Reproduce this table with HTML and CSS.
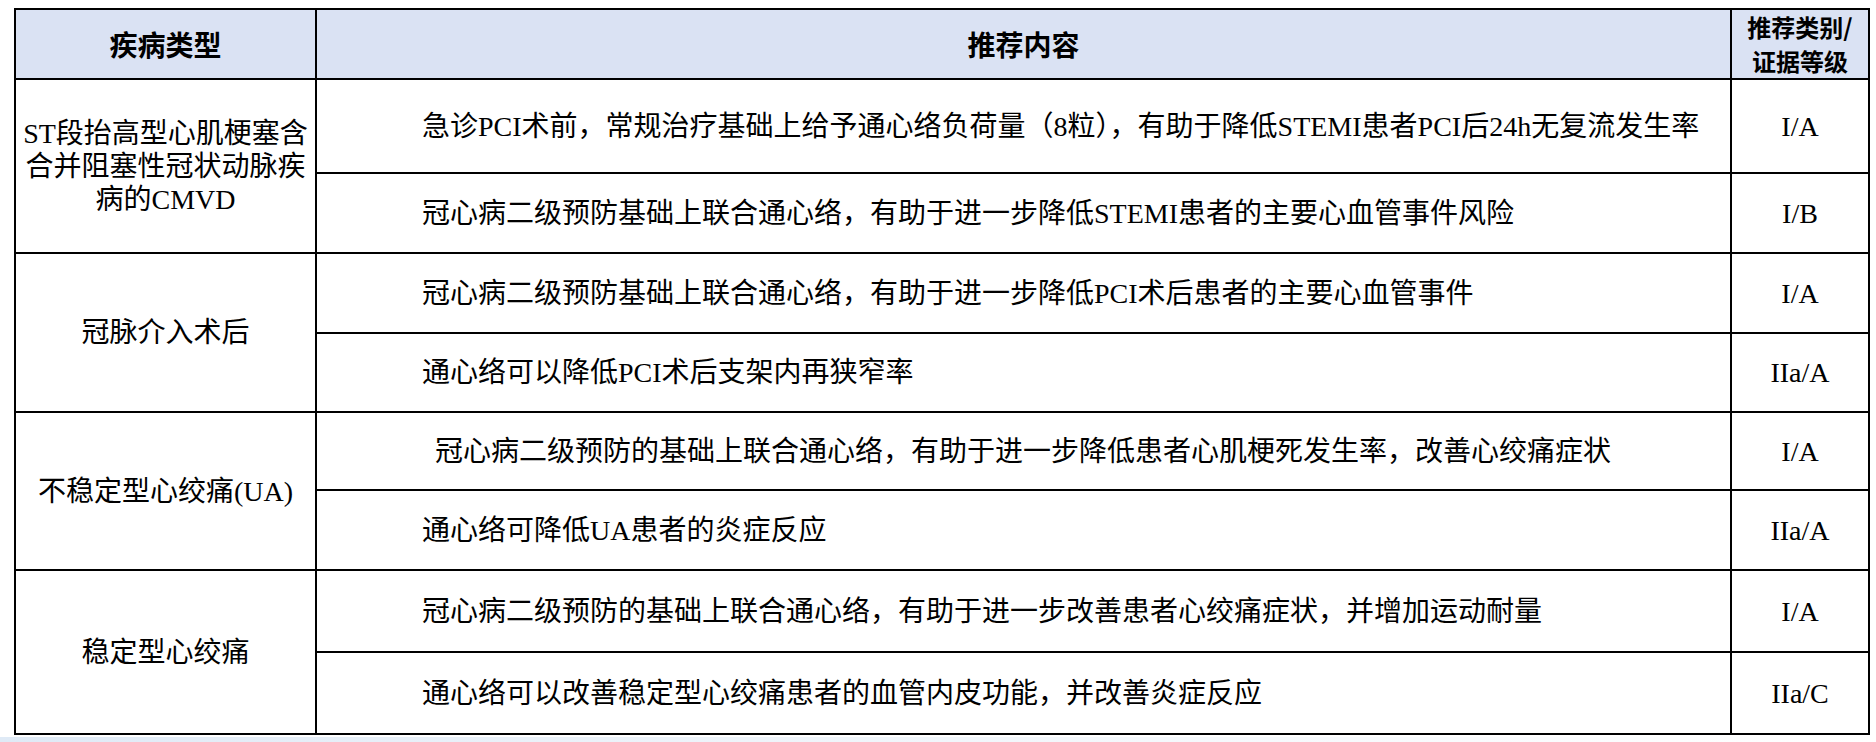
FILE: index.html
```html
<!DOCTYPE html>
<html lang="zh-CN">
<head>
<meta charset="utf-8">
<title>通心络推荐</title>
<link rel="stylesheet" href="styles.css">
</head>
<body>
<table class="rec-table">
  <colgroup>
    <col class="c-type">
    <col class="c-content">
    <col class="c-grade">
  </colgroup>
  <thead>
    <tr class="r-head">
      <th>疾病类型</th>
      <th>推荐内容</th>
      <th class="grade-head"><span class="gh-line">推荐类别/</span><span class="gh-line">证据等级</span></th>
    </tr>
  </thead>
  <tbody>
    <tr class="r1">
      <td class="type" rowspan="2">ST段抬高型心肌梗塞含合并阻塞性冠状动脉疾病的CMVD</td>
      <td class="content">急诊PCI术前，常规治疗基础上给予通心络负荷量（8粒），有助于降低STEMI患者PCI后24h无复流发生率</td>
      <td class="grade">I/A</td>
    </tr>
    <tr class="r2">
      <td class="content">冠心病二级预防基础上联合通心络，有助于进一步降低STEMI患者的主要心血管事件风险</td>
      <td class="grade">I/B</td>
    </tr>
    <tr class="r3">
      <td class="type" rowspan="2">冠脉介入术后</td>
      <td class="content">冠心病二级预防基础上联合通心络，有助于进一步降低PCI术后患者的主要心血管事件</td>
      <td class="grade">I/A</td>
    </tr>
    <tr class="r4">
      <td class="content">通心络可以降低PCI术后支架内再狭窄率</td>
      <td class="grade">IIa/A</td>
    </tr>
    <tr class="r5">
      <td class="type" rowspan="2">不稳定型心绞痛(UA)</td>
      <td class="content indent">冠心病二级预防的基础上联合通心络，有助于进一步降低患者心肌梗死发生率，改善心绞痛症状</td>
      <td class="grade">I/A</td>
    </tr>
    <tr class="r6">
      <td class="content">通心络可降低UA患者的炎症反应</td>
      <td class="grade">IIa/A</td>
    </tr>
    <tr class="r7">
      <td class="type" rowspan="2">稳定型心绞痛</td>
      <td class="content">冠心病二级预防的基础上联合通心络，有助于进一步改善患者心绞痛症状，并增加运动耐量</td>
      <td class="grade">I/A</td>
    </tr>
    <tr class="r8">
      <td class="content">通心络可以改善稳定型心绞痛患者的血管内皮功能，并改善炎症反应</td>
      <td class="grade">IIa/C</td>
    </tr>
  </tbody>
</table>
<div class="bottom-band"></div>
</body>
</html>
```

FILE: styles.css
```css
html, body {
  margin: 0;
  padding: 0;
  background: #ffffff;
}

body {
  padding: 8px 0 0 14px;
  width: 1876px;
  height: 742px;
  box-sizing: border-box;
  overflow: hidden;
  font-family: "Liberation Serif", "Noto Sans CJK SC", serif;
  color: #000;
}

.rec-table {
  border-collapse: collapse;
  table-layout: fixed;
  width: 1854px;
}

.c-type { width: 301px; }
.c-content { width: 1415px; }
.c-grade { width: 138px; }

.rec-table th,
.rec-table td {
  border: 2px solid #000;
  padding: 0;
  vertical-align: middle;
}

.rec-table th {
  background: #dae2f3;
  font-family: "Noto Sans CJK SC", sans-serif;
  font-weight: 700;
  font-size: 28px;
  line-height: 34px;
  text-align: center;
  color: #000;
}

.rec-table .grade-head {
  font-size: 24px;
  line-height: 34px;
  white-space: nowrap;
}

.gh-line {
  display: block;
  height: 34px;
}

.r-head { height: 70px; }
.r1 { height: 94px; }
.r2 { height: 80px; }
.r3 { height: 80px; }
.r4 { height: 79px; }
.r5 { height: 78px; }
.r6 { height: 80px; }
.r7 { height: 82px; }
.r8 { height: 82px; }

.rec-table .type {
  text-align: center;
  font-size: 28px;
  line-height: 33px;
  padding: 0 6px;
}

.rec-table .content {
  font-size: 28px;
  line-height: 33px;
  padding-left: 105px;
  white-space: nowrap;
}

.rec-table .content.indent {
  text-indent: 13px;
}

.rec-table .grade {
  text-align: center;
  font-size: 28px;
  line-height: 33px;
}

.bottom-band {
  margin-left: -14px;
  margin-top: 2px;
  height: 6px;
  width: 1876px;
  background: linear-gradient(90deg, #dfeaf6 0%, #eef4fa 40%, #ffffff 100%);
}
```
